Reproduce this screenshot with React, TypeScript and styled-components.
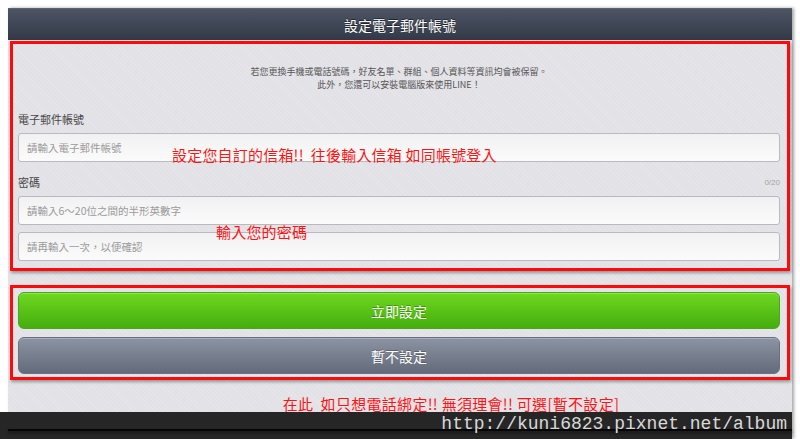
import React from 'react';
import styled, { createGlobalStyle, css } from 'styled-components';

const CJK = `"Noto Sans CJK TC", "Noto Sans", sans-serif`;

const Global = createGlobalStyle`
  html, body {
    margin: 0;
    height: 100%;
    overflow: hidden;
    background: #ffffff;
    font-family: ${CJK};
  }
`;

const Page = styled.div`
  position: relative;
  height: 439px;
  padding: 8px 8px 0;
  box-sizing: border-box;
`;

const Screen = styled.div`
  width: 784px;
  height: 100%;
  display: flex;
  flex-direction: column;
  box-shadow: 2px 0 3px rgba(0, 0, 0, 0.35);
  background: repeating-linear-gradient(
    45deg,
    #e6e5ea 0 1px,
    #e2e1e6 1px 3px
  );
`;

const TitleBar = styled.div`
  height: 32px;
  flex: none;
  display: flex;
  align-items: center;
  justify-content: center;
  background: linear-gradient(#4d5565, #323946);
  border-top: 1px solid #5b6372;
  box-sizing: border-box;
  color: #ffffff;
  font-size: 14px;
  text-shadow: 0 -1px 0 rgba(0, 0, 0, 0.5);
`;

const Body = styled.div`
  flex: 1;
  padding: 1px 2px 0;
`;

const Marked = styled.section<{ $gap?: number }>`
  position: relative;
  border: 3px solid #ff0a0a;
  box-shadow: 1px 2px 3px rgba(0, 0, 0, 0.35);
  display: flex;
  flex-direction: column;
  gap: ${p => p.$gap ?? 0}px;
`;

const FormBox = styled(Marked)`
  padding: 21px 7px 7px 5px;
`;

const ButtonBox = styled(Marked)`
  margin-top: 14px;
  padding: 4px 7px 3px 5px;
`;

const Notice = styled.p`
  margin: 0;
  font-size: 9px;
  line-height: 13px;
  color: #555555;
  text-align: center;
`;

const FieldHead = styled.div<{ $first?: boolean }>`
  display: flex;
  align-items: center;
  justify-content: space-between;
  margin: ${p => (p.$first ? '20px' : '12px')} 0 6px;
  height: 16px;
`;

const FieldLabel = styled.span`
  font-size: 11px;
  color: #454545;
`;

const Counter = styled.span`
  font-family: "Liberation Sans", sans-serif;
  font-size: 8px;
  color: #a5a5a5;
`;

const TextField = styled.input<{ $spaced?: boolean }>`
  display: block;
  width: 100%;
  height: 29px;
  box-sizing: border-box;
  margin: ${p => (p.$spaced ? '7px' : '0')} 0 0;
  padding: 0 8px;
  border: 1px solid #b9b9be;
  border-radius: 3px;
  background: linear-gradient(#f1f1f3, #fbfbfb);
  font-family: ${CJK};
  font-size: 10.5px;
  color: #333333;
  outline: none;
  &::placeholder {
    color: #9a9a9a;
  }
`;

const Note = styled.span<{ $left: number; $top: number }>`
  position: absolute;
  left: ${p => p.$left}px;
  top: ${p => p.$top}px;
  font-size: 15px;
  line-height: 18px;
  letter-spacing: 0.2px;
  color: #ff1414;
  white-space: pre;
`;

const tones = {
  green: css`
    background: linear-gradient(#6fd820, #45ad0e);
    border: 1px solid #49a815;
  `,
  gray: css`
    background: linear-gradient(#8c94a3, #636b7b);
    border: 1px solid #6a7180;
  `,
};

const ActionButton = styled.button<{ $tone: 'green' | 'gray' }>`
  display: block;
  width: 100%;
  height: 37px;
  border-radius: 6px;
  ${p => tones[p.$tone]};
  box-shadow: inset 0 1px 0 rgba(255, 255, 255, 0.25);
  color: #ffffff;
  font-family: ${CJK};
  font-size: 14px;
  text-shadow: 0 -1px 0 rgba(0, 0, 0, 0.25);
  cursor: pointer;
`;

const Footnote = styled.p`
  margin: 15px 0 0;
  padding-left: 102px;
  text-align: center;
  font-size: 15px;
  line-height: 18px;
  letter-spacing: 0.3px;
  white-space: pre;
  color: #ff1414;
`;

const Watermark = styled.div`
  position: absolute;
  left: 0;
  top: 412px;
  width: 792px;
  height: 27px;
  background: #262626;
  text-align: right;
  box-sizing: border-box;
  padding-right: 5px;
  font-family: "Liberation Mono", monospace;
  font-size: 18px;
  line-height: 24px;
  color: #d9d9d9;
  &::after {
    content: '';
    position: absolute;
    left: 8px;
    right: 0;
    top: 17px;
    height: 2px;
    background: #050505;
    box-shadow: 0 2px 3px rgba(0, 0, 0, 0.5);
  }
  span {
    position: relative;
    z-index: 1;
  }
`;

const App = () => (
  <>
    <Global />
    <Page>
      <Screen>
        <TitleBar>設定電子郵件帳號</TitleBar>
        <Body>
          <FormBox>
            <Notice>
              若您更換手機或電話號碼，好友名單、群組、個人資料等資訊均會被保留。
              <br />
              此外，您還可以安裝電腦版來使用LINE！
            </Notice>
            <FieldHead $first>
              <FieldLabel>電子郵件帳號</FieldLabel>
            </FieldHead>
            <TextField placeholder="請輸入電子郵件帳號" />
            <FieldHead>
              <FieldLabel>密碼</FieldLabel>
              <Counter>0/20</Counter>
            </FieldHead>
            <TextField type="password" placeholder="請輸入6～20位之間的半形英數字" />
            <TextField $spaced type="password" placeholder="請再輸入一次，以便確認" />
            <Note $left={159} $top={102}>設定您自訂的信箱!!  往後輸入信箱 如同帳號登入</Note>
            <Note $left={203} $top={179}>輸入您的密碼</Note>
          </FormBox>
          <ButtonBox $gap={8}>
            <ActionButton $tone="green">立即設定</ActionButton>
            <ActionButton $tone="gray">暫不設定</ActionButton>
          </ButtonBox>
          <Footnote>在此  如只想電話綁定!! 無須理會!! 可選[暫不設定]</Footnote>
        </Body>
      </Screen>
      <Watermark>
        <span>http://kuni6823.pixnet.net/album</span>
      </Watermark>
    </Page>
  </>
);

export default App;
